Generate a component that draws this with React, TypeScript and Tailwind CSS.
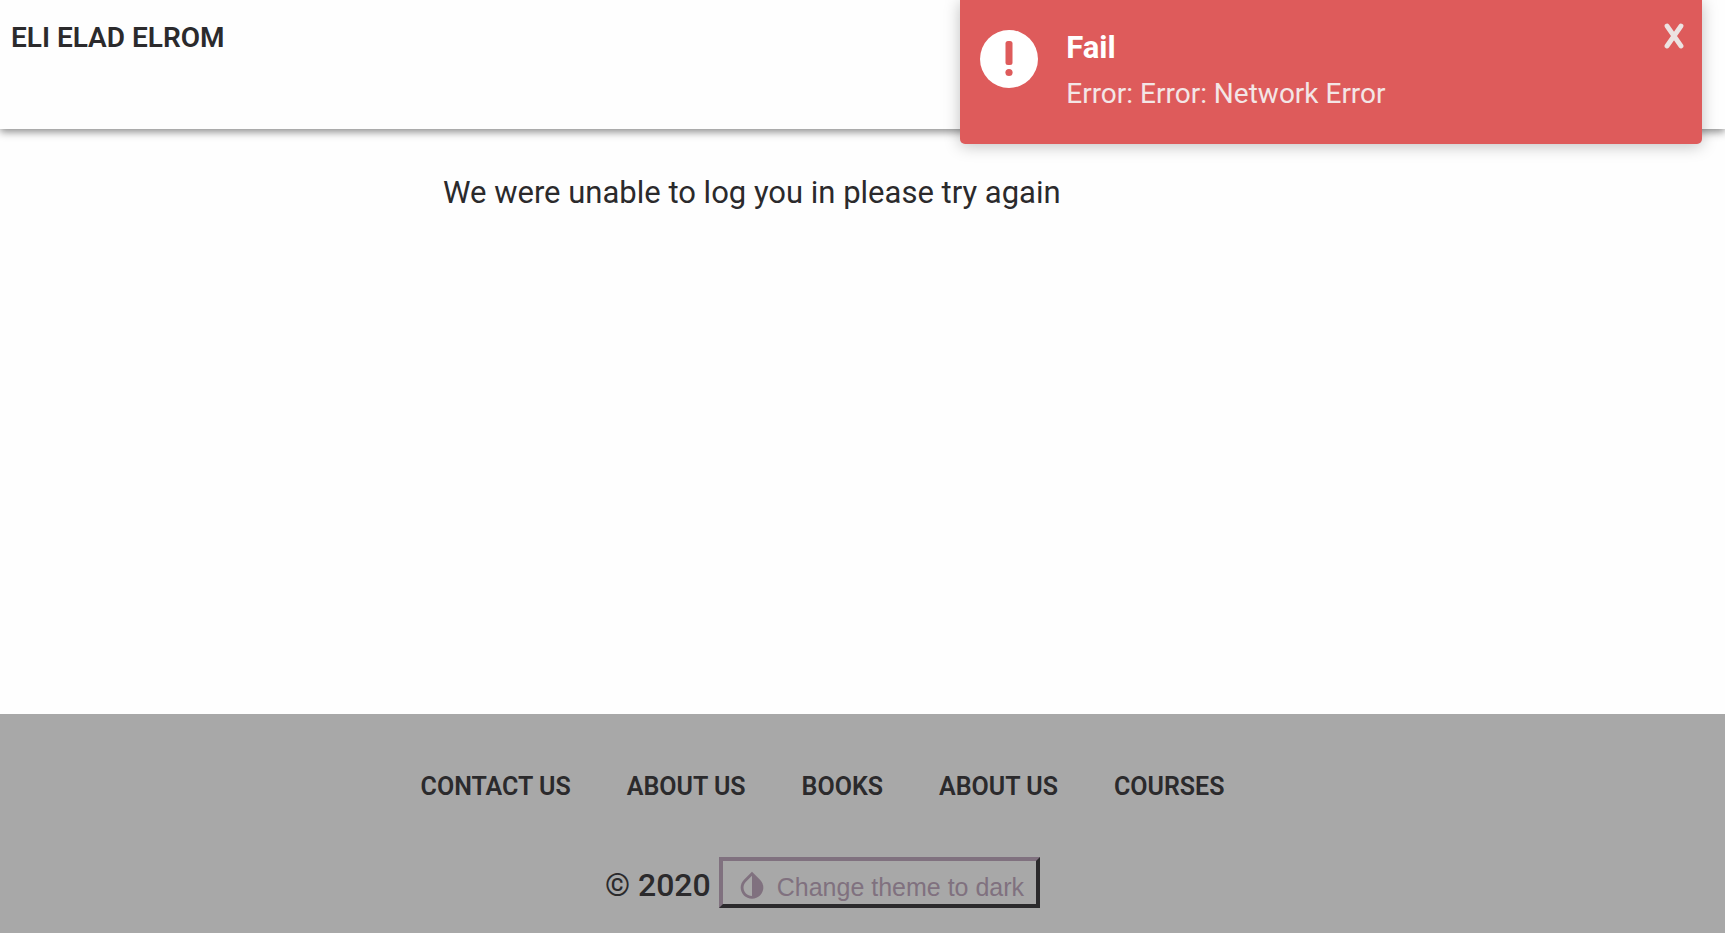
import { MdInvertColors } from "react-icons/md";

const footerLinks = [
  { label: "CONTACT US", href: "#contact" },
  { label: "ABOUT US", href: "#about" },
  { label: "BOOKS", href: "#books" },
  { label: "ABOUT US", href: "#about-us" },
  { label: "COURSES", href: "#courses" },
];

function Toast() {
  return (
    <div
      role="alert"
      className="absolute top-0 right-[23px] flex h-[144px] w-[43%] gap-7 rounded-b-[5px] bg-[#de5b5b] pt-[30px] pl-5 text-white shadow-[0_2px_16px_rgba(0,0,0,0.25)]"
    >
      <svg viewBox="0 0 58 58" className="size-[58px] shrink-0" aria-hidden="true">
        <circle cx="29" cy="29" r="29" fill="#fff" />
        <rect x="25.5" y="11" width="7" height="24" rx="2.5" fill="#de5b5b" />
        <circle cx="29" cy="42.5" r="3.6" fill="#de5b5b" />
      </svg>
      <div>
        <p className="text-[31px] leading-9 font-bold">Fail</p>
        <p className="mt-2 text-[28px] leading-10 text-[#f3e6e6]">Error: Error: Network Error</p>
      </div>
      <button
        type="button"
        aria-label="Close"
        className="absolute top-4 right-2 flex size-10 items-center justify-center text-[#ece3e2]"
      >
        <svg viewBox="0 0 20 26" className="h-[26px] w-5" aria-hidden="true">
          <path d="M3 3 17 23M17 3 3 23" stroke="currentColor" strokeWidth="4.8" strokeLinecap="round" />
        </svg>
      </button>
    </div>
  );
}

export default function App() {
  return (
    <div className="relative flex min-h-screen flex-col bg-[#fefefe] font-['Roboto','Liberation_Sans',sans-serif] text-[#2b2a2c]">
      <header className="h-[129px] px-[11px] pt-5 shadow-[0_3px_8px_rgba(0,0,0,0.45)]">
        <a href="#home" className="text-[28px] leading-9 font-semibold">
          ELI ELAD ELROM
        </a>
      </header>
      <Toast />
      <main className="grow px-[443px] pt-11">
        <p className="text-[31px] leading-10 whitespace-nowrap">We were unable to log you in please try again</p>
      </main>
      <footer className="flex h-[219px] flex-col items-center bg-[#a8a8a8] pt-[55px] pr-[80px]">
        <nav className="flex gap-14">
          {footerLinks.map((link) => (
            <a key={link.href} href={link.href} className="text-[25px] leading-9 font-semibold whitespace-nowrap">
              {link.label}
            </a>
          ))}
        </nav>
        <div className="mt-[52px] flex items-center gap-2">
          <span className="pt-1 text-[32px] leading-10 font-medium">© 2020</span>
          <button
            type="button"
            className="flex h-[51px] items-center gap-2 border-4 border-t-[#80717f] border-r-[#2b2a2c] border-b-[#2b2a2c] border-l-[#80717f] px-3 pt-[10px] font-['Liberation_Sans',Arial,sans-serif] text-[25px] whitespace-nowrap text-[#80717f]"
          >
            <MdInvertColors className="mb-1 size-[34px]" aria-hidden="true" />
            Change theme to dark
          </button>
        </div>
      </footer>
    </div>
  );
}
